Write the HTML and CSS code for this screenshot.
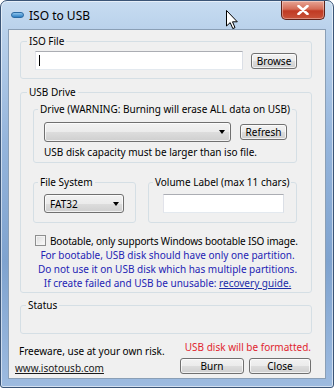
FILE: index.html
```html
<!DOCTYPE html>
<html lang="en">
<head>
    <meta charset="UTF-8">
    <meta name="viewport" content="width=device-width, initial-scale=1.0">
    <title>ISO to USB</title>
    <link rel="stylesheet" href="styles.css">
</head>
<body>

    <div class="window">
        <div class="titlebar">
            <span class="app-icon"></span>
            <span class="title">ISO to USB</span>
            <span class="close-btn">
                <svg width="12" height="10" viewBox="0 0 12 10">
                    <path d="M1.5 1 L10.5 9 M10.5 1 L1.5 9" stroke="#fff" stroke-width="2.6" stroke-linecap="round"/>
                </svg>
            </span>
        </div>

        <div class="client">
            <fieldset class="group iso-group">
                <legend>ISO File</legend>
                <div class="file-row">
                    <div class="textbox file-input"><span class="caret"></span></div>
                    <button class="btn browse-btn">Browse</button>
                </div>
            </fieldset>

            <fieldset class="group usb-group">
                <legend>USB Drive</legend>

                <fieldset class="group sub drive-group">
                    <legend>Drive (WARNING: Burning will erase ALL data on USB)</legend>
                    <div class="drive-row">
                        <div class="combo drive-combo"><span class="arrow"></span></div>
                        <button class="btn refresh-btn">Refresh</button>
                    </div>
                    <p class="note">USB disk capacity must be larger than iso file.</p>
                </fieldset>

                <div class="options-row">
                    <fieldset class="group sub fs-group">
                        <legend>File System</legend>
                        <div class="combo fs-combo">FAT32<span class="arrow"></span></div>
                    </fieldset>
                    <fieldset class="group sub label-group">
                        <legend>Volume Label (max 11 chars)</legend>
                        <div class="textbox label-input"></div>
                    </fieldset>
                </div>

                <label class="check-row">
                    <span class="checkbox"></span>
                    <span>Bootable, only supports Windows bootable ISO image.</span>
                </label>

                <div class="boot-info">
                    <p>For bootable, USB disk should have only one partition.</p>
                    <p>Do not use it on USB disk which has multiple partitions.</p>
                    <p>If create failed and USB be unusable: <a href="#">recovery guide.</a></p>
                </div>
            </fieldset>

            <fieldset class="group status-group">
                <legend>Status</legend>
                <div class="status-body"></div>
            </fieldset>

            <div class="footer">
                <div class="footer-left">
                    <p class="freeware">Freeware, use at your own risk.</p>
                    <a href="#" class="site-link">www.isotousb.com</a>
                </div>
                <div class="footer-right">
                    <p class="warn">USB disk will be formatted.</p>
                    <div class="footer-buttons">
                        <button class="btn burn-btn">Burn</button>
                        <button class="btn close-dlg-btn">Close</button>
                    </div>
                </div>
            </div>
        </div>

        <svg class="cursor" width="13" height="20" viewBox="0 0 13 20">
            <path d="M0.5 0.5 L0.5 16 L4.2 12.6 L6.8 18.6 L9 17.6 L6.5 11.8 L11.3 11.8 Z" fill="#fff" stroke="#000" stroke-width="1" stroke-linejoin="round"/>
        </svg>
    </div>

</body>
</html>
```

FILE: styles.css
```css
* {
    box-sizing: border-box;
}
body {
    margin: 0;
    font-family: "Noto Sans", sans-serif;
    font-size: 10px;
    color: #000;
}
p {
    margin: 0;
}
.window {
    position: relative;
    width: 334px;
    height: 388px;
    border: 1px solid #3b5577;
    border-radius: 7px 7px 3px 3px;
    background: linear-gradient(180deg, #c7dcf1 0px, #b9d1eb 30px, #95b5dc 140px, #7fa3cf 260px, #9dbbe0 100%);
    box-shadow: inset 0 0 0 1px rgba(255, 255, 255, 0.55);
    padding: 0 7px 8px;
    display: flex;
    flex-direction: column;
    overflow: hidden;
}
.titlebar {
    height: 28px;
    display: flex;
    align-items: center;
}
.app-icon {
    width: 13px;
    height: 6px;
    margin-left: 3px;
    border-radius: 3px;
    background: linear-gradient(180deg, #8cc3ec, #2d7fc4);
    border: 1px solid #2b6aa3;
}
.title {
    margin-left: 5px;
    font-size: 12px;
}
.close-btn {
    align-self: flex-start;
    margin-left: auto;
    margin-right: 1px;
    width: 44px;
    height: 19px;
    border: 1px solid #5e2219;
    border-top: none;
    border-radius: 0 0 5px 5px;
    background: linear-gradient(180deg, #e7a595 0%, #d46c57 45%, #c03a23 55%, #c9533a 100%);
    box-shadow: inset 0 0 0 1px rgba(255, 255, 255, 0.35);
    display: flex;
    align-items: center;
    justify-content: center;
}
.client {
    flex: 1;
    border: 1px solid #8a9fb6;
    background: #f0f0f0;
    padding: 5px 13px 0 11px;
}
.group {
    margin: 0;
    padding: 0 6px;
    min-width: 0;
    border: 1px solid #d5dfe5;
    border-radius: 3px;
}
.group legend {
    padding: 0 2px;
    line-height: 13px;
    white-space: nowrap;
}
.sub {
    padding: 0 4px;
}
.textbox {
    background: #fff;
    border: 1px solid #abadb3;
    border-left-color: #e2e3ea;
    border-right-color: #dbdfe6;
    border-bottom-color: #e3e9ef;
    height: 19px;
    padding: 3px 3px;
}
.caret {
    display: block;
    width: 1px;
    height: 11px;
    background: #000;
}
.btn {
    font: inherit;
    color: #000;
    height: 16px;
    padding: 0;
    border: 1px solid #707070;
    border-radius: 3px;
    background: linear-gradient(180deg, #f2f2f2 0%, #ebebeb 50%, #dddddd 50%, #cfcfcf 100%);
    box-shadow: inset 0 0 0 1px rgba(255, 255, 255, 0.7);
}
.combo {
    position: relative;
    border: 1px solid #707070;
    border-radius: 3px;
    background: linear-gradient(180deg, #f2f2f2 0%, #ebebeb 50%, #dddddd 50%, #cfcfcf 100%);
    box-shadow: inset 0 0 0 1px rgba(255, 255, 255, 0.7);
    display: flex;
    align-items: center;
    padding-left: 5px;
}
.arrow {
    position: absolute;
    top: 50%;
    margin-top: -2px;
    width: 0;
    height: 0;
    border-left: 3.5px solid transparent;
    border-right: 3.5px solid transparent;
    border-top: 4px solid #000;
}

/* ISO file */
.file-row {
    display: flex;
    align-items: center;
    margin: 3px 0 0 8px;
    padding-bottom: 8px;
}
.file-input {
    width: 208px;
}
.browse-btn {
    width: 46px;
    margin-left: 8px;
}

/* USB drive */
.usb-group {
    margin-top: 7px;
}
.drive-group {
    margin: 4px 8px 0 6px;
    padding-bottom: 3px;
}
.drive-row {
    display: flex;
    align-items: center;
    margin: 6px 0 0 6px;
}
.drive-combo {
    width: 187px;
    height: 20px;
}
.drive-combo .arrow {
    right: 5px;
}
.refresh-btn {
    width: 47px;
    margin-left: 9px;
}
.note {
    margin: 4px 0 0 6px;
    line-height: 13px;
}
.options-row {
    display: flex;
    gap: 12px;
    margin: 13px 8px 0 6px;
}
.fs-group {
    width: 103px;
    padding-bottom: 9px;
}
.fs-combo {
    width: 80px;
    height: 19px;
    margin: 5px 0 0 6px;
}
.fs-combo .arrow {
    right: 4px;
}
.label-group {
    flex: 1;
    padding-bottom: 9px;
}
.label-input {
    width: 121px;
    margin: 5px 0 0 10px;
}
.check-row {
    display: flex;
    align-items: center;
    gap: 4px;
    height: 13px;
    margin: 11px 0 0 8px;
    white-space: nowrap;
    letter-spacing: -0.15px;
}
.checkbox {
    flex-shrink: 0;
    width: 11px;
    height: 11px;
    border: 1px solid #8e8f8f;
    background: linear-gradient(135deg, #dcdcdc, #fbfbfb);
    box-shadow: inset 0 0 0 1px #f4f4f4;
}
.boot-info {
    margin-top: 1px;
    padding: 0 0 2px 3px;
    text-align: center;
    line-height: 14px;
    color: #2424b4;
}
.boot-info a {
    color: #1c2ea8;
}

/* status */
.status-group {
    margin-top: 6px;
    padding: 0 5px;
}
.status-body {
    height: 21px;
}

/* footer */
.footer {
    display: flex;
    justify-content: space-between;
}
.footer-left {
    display: flex;
    flex-direction: column;
    align-items: flex-start;
    line-height: 13px;
}
.freeware {
    margin: 11px 0 0 -1px;
}
.site-link {
    margin: 4px 0 0 -5px;
    color: #1a1a1a;
}
.footer-right {
    display: flex;
    flex-direction: column;
    align-items: flex-end;
    margin-right: 1px;
    line-height: 13px;
}
.warn {
    margin-top: 7px;
    color: #e0262f;
}
.footer-buttons {
    display: flex;
    gap: 5px;
    margin-top: 4px;
}
.burn-btn {
    width: 64px;
}
.close-dlg-btn {
    width: 62px;
}
.cursor {
    position: absolute;
    left: 225px;
    top: 9px;
}
```
